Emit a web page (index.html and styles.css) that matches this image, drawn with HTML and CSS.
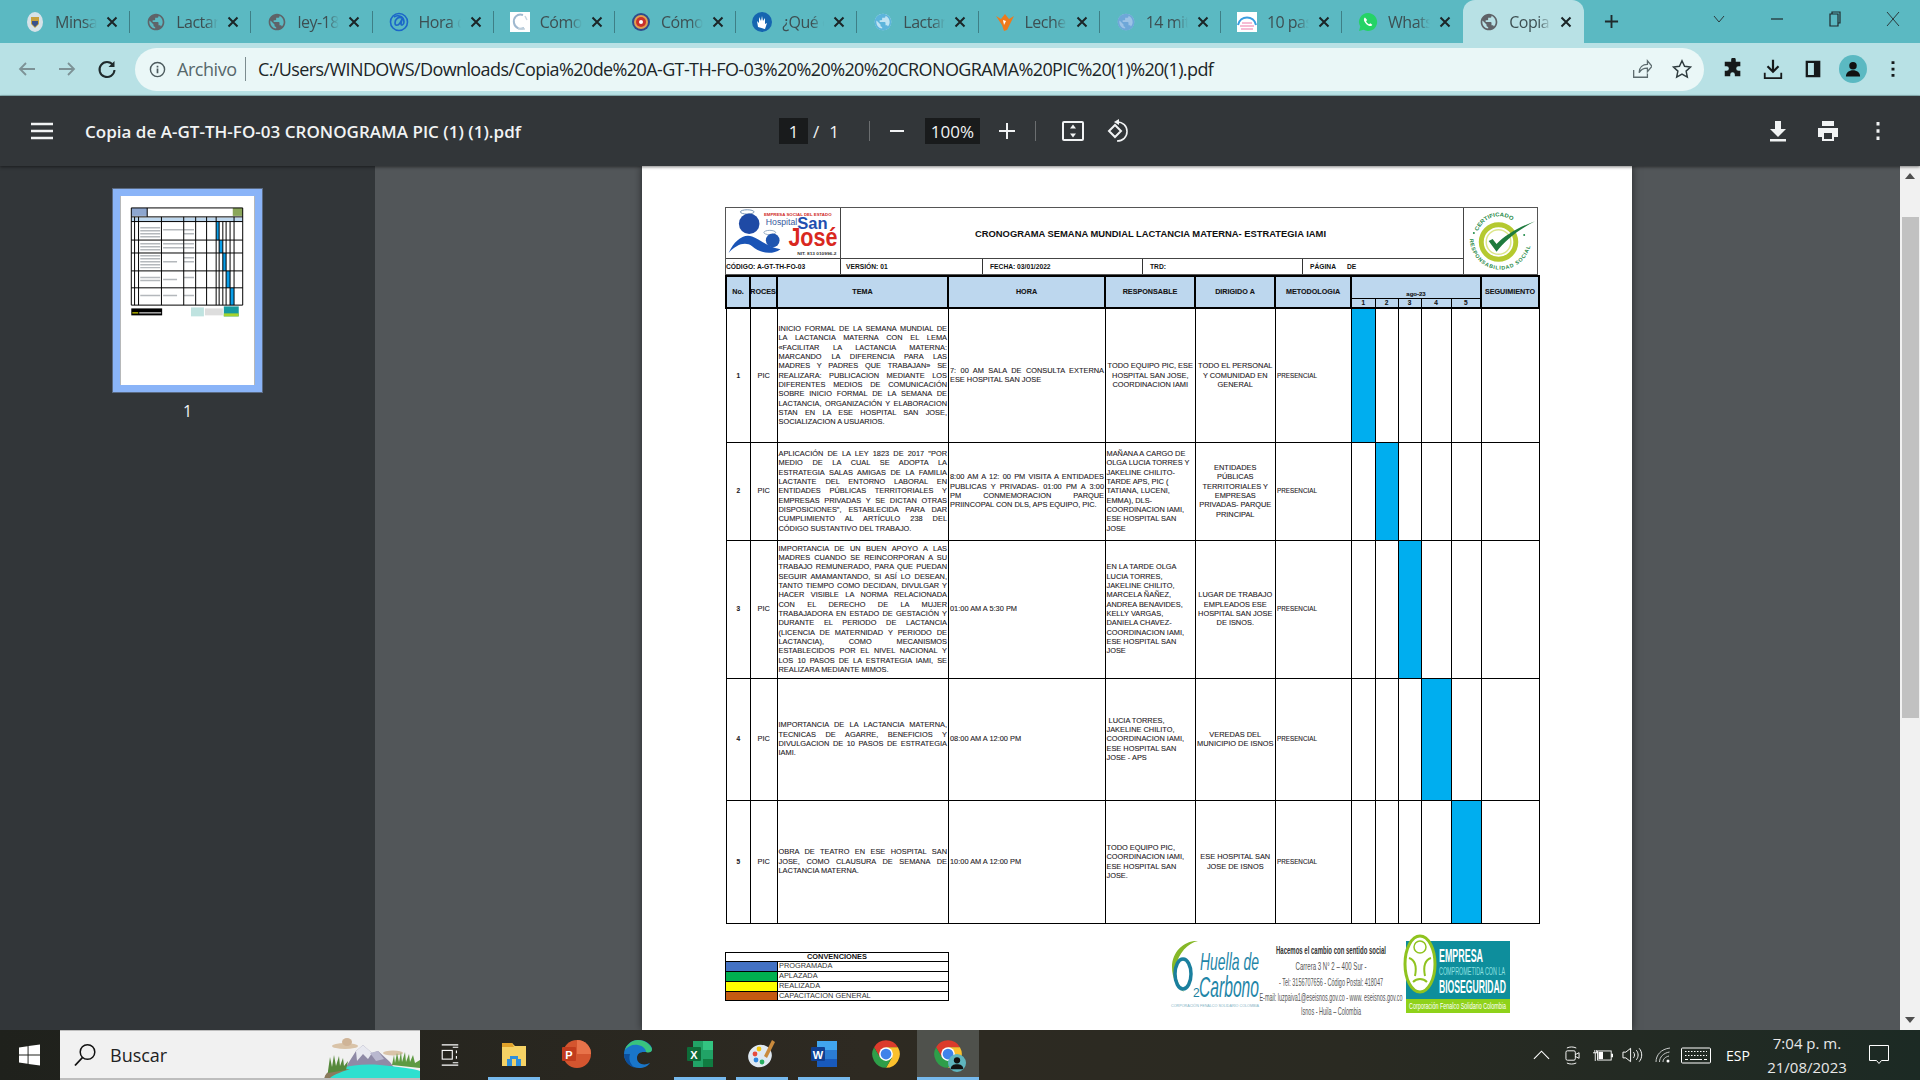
FILE: index.html
```html
<!DOCTYPE html>
<html lang="es">
<head>
<meta charset="utf-8">
<title>Copia de A-GT-TH-FO-03 CRONOGRAMA PIC (1) (1).pdf</title>
<link rel="stylesheet" href="styles.css">
</head>
<body>
<svg class="sprite" aria-hidden="true">
  <symbol id="globe" viewBox="0 0 24 24"><path d="M12 2C6.48 2 2 6.48 2 12s4.48 10 10 10 10-4.48 10-10S17.52 2 12 2zm-1 17.93c-3.95-.49-7-3.85-7-7.93 0-.62.08-1.21.21-1.79L9 15v1c0 1.1.9 2 2 2v1.93zm6.9-2.54c-.26-.81-1-1.39-1.9-1.39h-1v-3c0-.55-.45-1-1-1H8v-2h2c.55 0 1-.45 1-1V7h2c1.1 0 2-.9 2-2v-.41c2.93 1.19 5 4.06 5 7.41 0 2.08-.8 3.97-2.1 5.39z"/></symbol>
  <symbol id="close" viewBox="0 0 12 12"><path d="M1.5 1.5l9 9M10.5 1.5l-9 9" fill="none" stroke="currentColor" stroke-width="2"/></symbol>
  <symbol id="chrome" viewBox="0 0 24 24"><path fill="#db3b2c" d="M2.47 6.5A11 11 0 0 1 21.53 6.5H12L7.24 14.75Z"/><path fill="#fbc02d" d="M21.53 6.5A11 11 0 0 1 12 23L16.76 14.75 12 6.5Z"/><path fill="#2e9e49" d="M12 23A11 11 0 0 1 2.47 6.5L7.24 14.75H16.76Z"/><circle cx="12" cy="12" r="5.5" fill="#fff"/><circle cx="12" cy="12" r="4.3" fill="#3f83ea"/></symbol>
</svg>

<header class="tabstrip">
  <div class="tab"><svg class="fav" viewBox="0 0 20 20"><ellipse cx="10" cy="10" rx="8" ry="10" fill="#d6e2e8"/><path d="M6 5h8v7l-4 4-4-4z" fill="#c8a13c"/><path d="M7 9h6v3l-3 3-3-3z" fill="#39518c"/></svg><span class="tab-title">Minsal</span><svg class="tab-x"><use href="#close"/></svg></div>
  <div class="tab"><svg class="fav fav-gray" viewBox="0 0 24 24"><use href="#globe"/></svg><span class="tab-title">Lactancia</span><svg class="tab-x"><use href="#close"/></svg></div>
  <div class="tab"><svg class="fav fav-gray" viewBox="0 0 24 24"><use href="#globe"/></svg><span class="tab-title">ley-1823</span><svg class="tab-x"><use href="#close"/></svg></div>
  <div class="tab"><svg class="fav" viewBox="0 0 20 20"><circle cx="10" cy="10" r="8.5" fill="none" stroke="#1b66c9" stroke-width="1.6"/><path d="M13 6c-3-2-7 1-7 5 0 3 3 3 5 0l2-4-1 5c0 2 3 1 3-2 0-5-5-8-10-5" fill="none" stroke="#1b66c9" stroke-width="1.6"/></svg><span class="tab-title">Hora de</span><svg class="tab-x"><use href="#close"/></svg></div>
  <div class="tab"><svg class="fav" viewBox="0 0 20 20"><rect width="20" height="20" fill="#fff"/><path d="M13 3C7 1 3 6 4 11c1 5 6 7 10 5" fill="none" stroke="#9fb8cf" stroke-width="2"/><path d="M15 4l2 4M8 17h7" stroke="#c8d6e0" stroke-width="1.5"/></svg><span class="tab-title">Cómo</span><svg class="tab-x"><use href="#close"/></svg></div>
  <div class="tab"><svg class="fav" viewBox="0 0 20 20"><circle cx="10" cy="10" r="9" fill="#2f4b8c"/><circle cx="10" cy="10" r="7" fill="#e0a050"/><circle cx="10" cy="10" r="5" fill="#c9302c"/><circle cx="10" cy="10" r="2" fill="#fff"/></svg><span class="tab-title">Cómo</span><svg class="tab-x"><use href="#close"/></svg></div>
  <div class="tab"><svg class="fav" viewBox="0 0 20 20"><circle cx="10" cy="10" r="10" fill="#1565b0"/><path d="M6 15l-1-6 2 2 0-6 2 4 1-5 1 5 2-3 0 6 2-1-2 6z" fill="#fff"/></svg><span class="tab-title">¿Qué es</span><svg class="tab-x"><use href="#close"/></svg></div>
  <div class="tab"><svg class="fav fav-sky" viewBox="0 0 24 24"><circle cx="12" cy="12" r="10" fill="#bfe3f3"/><use href="#globe"/></svg><span class="tab-title">Lactancia</span><svg class="tab-x"><use href="#close"/></svg></div>
  <div class="tab"><svg class="fav" viewBox="0 0 20 20"><path d="M1 4l5 3 4-5 4 5 5-3-4 8-3 6-3 1-2-6z" fill="#ee7a1c"/><path d="M8 8l3 1-2 4z" fill="#fff"/></svg><span class="tab-title">Leche</span><svg class="tab-x"><use href="#close"/></svg></div>
  <div class="tab"><svg class="fav fav-blue" viewBox="0 0 24 24"><circle cx="12" cy="12" r="10" fill="#9cc3e6"/><use href="#globe"/></svg><span class="tab-title">14 mitos</span><svg class="tab-x"><use href="#close"/></svg></div>
  <div class="tab"><svg class="fav" viewBox="0 0 20 20"><rect width="20" height="20" fill="#fff"/><path d="M1 13C3 3 17 3 19 13" fill="none" stroke="#3b9ee0" stroke-width="2"/><path d="M3 14h14M5 11h10M4 17h12" stroke="#f3a6c6" stroke-width="1.6"/></svg><span class="tab-title">10 pasos</span><svg class="tab-x"><use href="#close"/></svg></div>
  <div class="tab"><svg class="fav" viewBox="0 0 20 20"><path d="M10 1a9 9 0 0 0-7.7 13.6L1 19l4.6-1.2A9 9 0 1 0 10 1z" fill="#25d366"/><path d="M7 5.5c-1 .5-1.5 2-.7 3.7 1 2.200 3 4 5 4.700 1.500.5 2.700-.2 3-1.200l-2-1.500-1.200 1c-1.300-.5-2.500-1.800-3-3l1-1.200z" fill="#fff"/></svg><span class="tab-title">WhatsApp</span><svg class="tab-x"><use href="#close"/></svg></div>
  <div class="tab tab-active"><svg class="fav fav-gray" viewBox="0 0 24 24"><use href="#globe"/></svg><span class="tab-title">Copia de</span><svg class="tab-x"><use href="#close"/></svg></div>
  <svg class="newtab" viewBox="0 0 16 16"><path d="M8 1v14M1 8h14" stroke="#1f2a2c" stroke-width="2"/></svg>
  <div class="winctl">
    <svg class="winbtn" viewBox="0 0 16 16"><path d="M3 5l5 6 5-6" fill="none" stroke="#2b3a3d" stroke-width="1"/></svg>
    <svg class="winbtn" viewBox="0 0 16 16"><path d="M2 8h12" stroke="#1f2a2c" stroke-width="1.2"/></svg>
    <svg class="winbtn" viewBox="0 0 16 16"><path d="M5 3V1h8v11h-2M3 3h8v12H3z" fill="none" stroke="#1f2a2c" stroke-width="1.200"/></svg>
    <svg class="winbtn" viewBox="0 0 16 16"><path d="M2 1l12 14M14 1L2 15" stroke="#2b3a3d" stroke-width="1"/></svg>
  </div>
</header>

<nav class="toolbar">
  <svg class="nav-btn" viewBox="0 0 24 24"><path d="M20 12H5M11 6l-6 6 6 6" fill="none" stroke="#7d9296" stroke-width="1.800"/></svg>
  <svg class="nav-btn" viewBox="0 0 24 24"><path d="M4 12h15M13 6l6 6-6 6" fill="none" stroke="#7d9296" stroke-width="1.800"/></svg>
  <svg class="nav-btn" viewBox="0 0 24 24"><path d="M18 8a7.500 7.500 0 1 0 1.500 5" fill="none" stroke="#1f2a2c" stroke-width="2"/><path d="M19.500 4v6h-6z" fill="#1f2a2c"/></svg>
  <div class="omnibox">
    <svg class="info" viewBox="0 0 18 18"><circle cx="9" cy="9" r="7.500" fill="none" stroke="#4c5a5d" stroke-width="1.500"/><path d="M9 8v5M9 5v1.800" stroke="#4c5a5d" stroke-width="1.800"/></svg>
    <span class="scheme">Archivo</span>
    <span class="omni-sep"></span>
    <span class="url">C:/Users/WINDOWS/Downloads/Copia%20de%20A-GT-TH-FO-03%20%20%20%20CRONOGRAMA%20PIC%20(1)%20(1).pdf</span>
    <svg class="omni-ico omni-share" viewBox="0 0 24 24"><path d="M4 13v8h15v-4M10 16c0-6 4-9 9-9V3l5 6-5 6v-4c-4 0-7 1-9 5z" fill="none" stroke="#5d6b6e" stroke-width="1.400"/></svg>
    <svg class="omni-ico" viewBox="0 0 24 24"><path d="M12 3l2.800 6 6.500.8-4.800 4.500 1.300 6.500L12 17.500 6.200 20.800l1.300-6.500L2.700 9.800 9.200 9z" fill="none" stroke="#2f3c3f" stroke-width="1.600"/></svg>
  </div>
  <div class="tool-right">
    <svg class="tool-btn" viewBox="0 0 24 24"><path fill="#15191a" d="M10 2a2.500 2.500 0 0 1 5 0v2h5v5h-2a2.500 2.500 0 0 0 0 5h2v6h-6v-2a2.500 2.500 0 0 0-5 0v2H3v-6h2a2.500 2.500 0 0 0 0-5H3V4h7z"/></svg>
    <svg class="tool-btn" viewBox="0 0 24 24"><path d="M12 2v12M6 9l6 6 6-6" fill="none" stroke="#15191a" stroke-width="2.400"/><path d="M3 16v6h18v-6" fill="none" stroke="#15191a" stroke-width="2"/></svg>
    <svg class="tool-btn" viewBox="0 0 24 24"><path d="M4 3h16v18H4zM6.500 5.500v13H13v-13z" fill="#15191a" fill-rule="evenodd"/></svg>
    <div class="avatar"><svg viewBox="0 0 24 24"><circle cx="12" cy="8" r="4.500" fill="#111"/><path d="M3.500 21c0-5 4-7.500 8.500-7.500s8.500 2.500 8.500 7.500z" fill="#111"/></svg></div>
    <svg class="tool-btn" viewBox="0 0 24 24"><path d="M12 3.500v3M12 10.500v3M12 17.500v3" stroke="#15191a" stroke-width="3.200"/></svg>
  </div>
</nav>

<section class="pdfbar">
  <div class="pdf-left">
    <svg class="hamb" viewBox="0 0 22 18"><path d="M0 2h22M0 9h22M0 16h22" stroke="#f1f3f4" stroke-width="2.500"/></svg>
    <span class="pdf-title">Copia de A-GT-TH-FO-03 CRONOGRAMA PIC (1) (1).pdf</span>
  </div>
  <div class="pdf-mid">
    <span class="field field-page">1</span>
    <span class="pdf-text slash">/</span>
    <span class="pdf-text total">1</span>
    <span class="pdf-sep sep-a"></span>
    <svg class="pdf-ico ico-minus" viewBox="0 0 16 16"><path d="M1 8h14" stroke="#f1f3f4" stroke-width="2"/></svg>
    <span class="field field-zoom">100%</span>
    <svg class="pdf-ico ico-plus" viewBox="0 0 16 16"><path d="M8 0v16M0 8h16" stroke="#f1f3f4" stroke-width="2"/></svg>
    <span class="pdf-sep sep-b"></span>
    <svg class="pdf-ico ico-fit" viewBox="0 0 24 24"><rect x="2" y="3" width="20" height="18" rx="1" fill="none" stroke="#f1f3f4" stroke-width="2"/><path d="M12 5.500l3 4H9zM12 18.500l3-4H9z" fill="#f1f3f4"/></svg>
    <svg class="pdf-ico ico-rot" viewBox="0 0 24 24"><path d="M9 6l-6 6 6 6 6-6z" fill="none" stroke="#f1f3f4" stroke-width="2"/><path d="M11 3c6 0 10 4 10 9.500S17 22 11 22" fill="none" stroke="#f1f3f4" stroke-width="1.600"/><path d="M8 3l5-3v6z" fill="#f1f3f4"/></svg>
  </div>
  <div class="pdf-right">
    <svg class="pdf-act" viewBox="0 0 24 24"><path d="M9 2h6v8h5l-8 8-8-8h5zM4 20h16v2.500H4z" fill="#f1f3f4"/></svg>
    <svg class="pdf-act" viewBox="0 0 24 24"><path d="M6 2h12v5H6zM2 9h20v9h-4v4H6v-4H2zM8 14v6h8v-6z" fill="#f1f3f4" fill-rule="evenodd"/></svg>
    <svg class="pdf-act" viewBox="0 0 24 24"><path d="M12 3v3.500M12 10.200v3.500M12 17.500V21" stroke="#f1f3f4" stroke-width="3"/></svg>
  </div>
</section>

<main class="viewer">
  <aside class="sidebar">
    <div class="thumb">
      <svg viewBox="0 0 135 190" class="thumb-svg">
        <rect width="135" height="190" fill="#fff"/>
        <rect x="11" y="12" width="16" height="8" fill="#8da6cf"/>
        <rect x="113" y="12" width="10" height="8" fill="#8aa65a"/>
        <rect x="11" y="21.700" width="112" height="4" fill="#bdd7ee"/>
        <path d="M20 32h20M20 35h20M20 38h20M20 41h20M20 48h20M20 51h20M20 54h20M20 60h20M20 63h20M20 66h20M20 69h20M20 72h20M20 82h20M20 85h20M20 100h20M64 34h10M64 38h10M64 48h10M64 52h10M64 62h10M64 66h10M64 82h10M64 100h10M43 34h20M43 48h20M43 52h20M43 66h14M43 84h14M43 100h14" stroke="#b4b8bc" stroke-width="1.500"/>
        <rect x="96.300" y="25.700" width="3" height="18.600" fill="#0a9ee8"/>
        <rect x="99.300" y="44.300" width="3.700" height="13" fill="#0a9ee8"/>
        <rect x="103" y="57.300" width="3.300" height="18" fill="#0a9ee8"/>
        <rect x="106.300" y="75.300" width="4" height="17" fill="#0a9ee8"/>
        <rect x="110.300" y="92.300" width="4" height="17.400" fill="#0a9ee8"/>
        <path d="M11 12H123V109.700H11ZM27 12V21M11 21H123M11 25.700H123M11 44.300H123M11 57.300H123M11 75.300H123M11 92.300H123M14.300 21V109.700M18.300 21V109.700M41.300 21V109.700M63.700 21V109.700M75.700 21V109.700M86.700 21V109.700M96.300 21V109.700M99.300 25.700V109.700M103 25.700V109.700M106.300 25.700V109.700M110.300 25.700V109.700M114.300 21V109.700" fill="none" stroke="#000" stroke-width="1"/>
        <rect x="11" y="113" width="31" height="7" fill="#000"/>
        <rect x="12" y="117" width="6" height="1" fill="#ff0"/><rect x="19" y="117" width="22" height="1" fill="#fff"/>
        <rect x="71" y="112" width="13" height="9" fill="#bfe3e0"/><rect x="85" y="113" width="18" height="7" fill="#ddd"/><rect x="104" y="111" width="15" height="10" fill="#159aa0"/><rect x="104" y="118" width="15" height="3" fill="#a6d32e"/>
      </svg>
    </div>
    <span class="thumb-num">1</span>
  </aside>

  <div class="canvas">
    <article class="page">
      <div class="dochead">
        <div class="dh-logo">
          <svg viewBox="0 0 115 51" class="logo-hsj">
            <ellipse cx="21" cy="4" rx="7" ry="2.200" fill="none" stroke="#7a96b5" stroke-width="1"/>
            <circle cx="23" cy="16" r="10.500" fill="#1f4aa5"/>
            <ellipse cx="44" cy="25" rx="6" ry="2.200" fill="none" stroke="#7a96b5" stroke-width=".8"/>
            <circle cx="47" cy="33" r="7" fill="#1f55b0"/>
            <path d="M2 46c6-13 15-20 24-17 8 3 16 11 29 13-10 7-22 3-29-3-7-5-16-2-24 7z" fill="#1a54b6"/>
            <text x="38" y="8.500" class="lg-red" textLength="69" lengthAdjust="spacingAndGlyphs">EMPRESA SOCIAL DEL ESTADO</text>
            <text x="40" y="17.500" class="lg-hosp" textLength="32" lengthAdjust="spacingAndGlyphs">Hospital</text>
            <text x="72" y="21" class="lg-san" textLength="31" lengthAdjust="spacingAndGlyphs">San</text>
            <text x="63" y="38.500" class="lg-jose" textLength="50" lengthAdjust="spacingAndGlyphs">José</text>
            <text x="72" y="47.500" class="lg-nit" textLength="40" lengthAdjust="spacingAndGlyphs">NIT. 813 010996-2</text>
          </svg>
        </div>
        <div class="dh-title">CRONOGRAMA SEMANA MUNDIAL LACTANCIA MATERNA- ESTRATEGIA IAMI</div>
        <div class="dh-cert">
          <svg viewBox="0 0 74 66" class="logo-cert">
            <defs>
              <path id="arcTop" d="M14 23A23 23 0 0 1 58 26"/>
              <path id="arcBot" d="M6 31A31 31 0 0 0 68 31"/>
            </defs>
            <circle cx="35" cy="34" r="17.500" fill="#fff" stroke="#b5c92f" stroke-width="5"/>
            <circle cx="35" cy="34" r="12.500" fill="#fff" stroke="#dce68a" stroke-width="1.500"/>
            <path d="M25 33l8 11C41 33 54 22 72 13 55 19 42 27 33 36l-4-5z" fill="#1e7a3d"/>
            <circle cx="10" cy="25" r="1" fill="#1f8a48"/><circle cx="61" cy="27" r="1" fill="#1f8a48"/>
            <text class="cert-t"><textPath href="#arcTop" textLength="42" lengthAdjust="spacingAndGlyphs">CERTIFICADO</textPath></text>
            <text class="cert-b"><textPath href="#arcBot" textLength="90" lengthAdjust="spacing">RESPONSABILIDAD SOCIAL</textPath></text>
          </svg>
        </div>
        <div class="dh-cell dh-code">CÓDIGO: A-GT-TH-FO-03</div>
        <div class="dh-cell dh-pad-s">VERSIÓN: 01</div>
        <div class="dh-cell dh-pad">FECHA: 03/01/2022</div>
        <div class="dh-cell dh-pad">TRD:</div>
        <div class="dh-cell dh-pad dh-last">PÁGINA<span class="dh-de">DE</span></div>
      </div>

      <table class="sched">
        <colgroup>
          <col class="c-no"><col class="c-pr"><col class="c-tema"><col class="c-hora"><col class="c-resp"><col class="c-dir"><col class="c-met">
          <col class="c-d1"><col class="c-d2"><col class="c-d3"><col class="c-d4"><col class="c-d5"><col class="c-seg">
        </colgroup>
        <thead>
          <tr class="hrow1">
            <th rowspan="2">No.</th>
            <th rowspan="2"><span class="clip-center">PROCESO</span></th>
            <th rowspan="2">TEMA</th>
            <th rowspan="2">HORA</th>
            <th rowspan="2">RESPONSABLE</th>
            <th rowspan="2">DIRIGIDO A</th>
            <th rowspan="2">METODOLOGIA</th>
            <th colspan="5" class="th-month">ago-23</th>
            <th rowspan="2">SEGUIMIENTO</th>
          </tr>
          <tr class="hrow2"><th>1</th><th>2</th><th>3</th><th>4</th><th>5</th></tr>
        </thead>
        <tbody>
          <tr class="r1">
            <td class="num">1</td><td class="ctr">PIC</td>
            <td class="just">INICIO FORMAL DE LA SEMANA MUNDIAL DE LA LACTANCIA MATERNA CON EL LEMA «FACILITAR LA LACTANCIA MATERNA: MARCANDO LA DIFERENCIA PARA LAS MADRES Y PADRES QUE TRABAJAN» SE REALIZARA: PUBLICACION MEDIANTE LOS DIFERENTES MEDIOS DE COMUNICACIÓN SOBRE INICIO FORMAL DE LA SEMANA DE LACTANCIA, ORGANIZACIÓN Y ELABORACION STAN EN LA ESE HOSPITAL SAN JOSE, SOCIALIZACION A USUARIOS.</td>
            <td class="just hora">7: 00 AM SALA DE CONSULTA EXTERNA ESE HOSPITAL SAN JOSE</td>
            <td class="ctr">TODO EQUIPO PIC, ESE HOSPITAL SAN JOSE, COORDINACION IAMI</td>
            <td class="ctr">TODO EL PERSONAL Y COMUNIDAD EN GENERAL</td>
            <td class="met">PRESENCIAL</td>
            <td class="on"></td><td></td><td></td><td></td><td></td><td></td>
          </tr>
          <tr class="r2">
            <td class="num">2</td><td class="ctr">PIC</td>
            <td class="just"><span class="jblock">APLICACIÓN DE LA LEY 1823 DE 2017 "POR MEDIO DE LA CUAL SE ADOPTA LA ESTRATEGIA SALAS AMIGAS DE LA FAMILIA LACTANTE DEL ENTORNO LABORAL EN ENTIDADES PÚBLICAS TERRITORIALES Y EMPRESAS PRIVADAS Y SE DICTAN OTRAS DISPOSICIONES", ESTABLECIDA PARA DAR</span><span class="jblock">CUMPLIMIENTO AL ARTÍCULO 238 DEL</span>CÓDIGO SUSTANTIVO DEL TRABAJO.</td>
            <td class="just hora">8:00 AM A 12: 00 PM VISITA A ENTIDADES PUBLICAS Y PRIVADAS- 01:00 PM A 3:00 PM CONMEMORACION PARQUE PRIINCOPAL CON DLS, APS EQUIPO, PIC.</td>
            <td class="lft">MAÑANA A CARGO DE OLGA LUCIA TORRES Y JAKELINE CHILITO- TARDE APS, PIC ( TATIANA, LUCENI, EMMA), DLS- COORDINACION IAMI, ESE HOSPITAL SAN JOSE</td>
            <td class="ctr">ENTIDADES PÚBLICAS TERRITORIALES Y EMPRESAS PRIVADAS- PARQUE PRINCIPAL</td>
            <td class="met">PRESENCIAL</td>
            <td></td><td class="on"></td><td></td><td></td><td></td><td></td>
          </tr>
          <tr class="r3">
            <td class="num">3</td><td class="ctr">PIC</td>
            <td class="just">IMPORTANCIA DE UN BUEN APOYO A LAS MADRES CUANDO SE REINCORPORAN A SU TRABAJO REMUNERADO, PARA QUE PUEDAN SEGUIR AMAMANTANDO, SI ASÍ LO DESEAN, TANTO TIEMPO COMO DECIDAN, DIVULGAR Y HACER VISIBLE LA NORMA RELACIONADA CON EL DERECHO DE LA MUJER TRABAJADORA EN ESTADO DE GESTACIÓN Y DURANTE EL PERIODO DE LACTANCIA (LICENCIA DE MATERNIDAD Y PERIODO DE LACTANCIA), COMO MECANISMOS ESTABLECIDOS POR EL NIVEL NACIONAL Y LOS 10 PASOS DE LA ESTRATEGIA IAMI, SE REALIZARA MEDIANTE MIMOS.</td>
            <td class="just hora">01:00 AM A 5:30 PM</td>
            <td class="lft">EN LA TARDE OLGA LUCIA TORRES, JAKELINE CHILITO, MARCELA ÑAÑEZ, ANDREA BENAVIDES, KELLY VARGAS, DANIELA CHAVEZ- COORDINACION IAMI, ESE HOSPITAL SAN JOSE</td>
            <td class="ctr">LUGAR DE TRABAJO EMPLEADOS ESE HOSPITAL SAN JOSE DE ISNOS.</td>
            <td class="met">PRESENCIAL</td>
            <td></td><td></td><td class="on"></td><td></td><td></td><td></td>
          </tr>
          <tr class="r4">
            <td class="num">4</td><td class="ctr">PIC</td>
            <td class="just">IMPORTANCIA DE LA LACTANCIA MATERNA, TECNICAS DE AGARRE, BENEFICIOS Y DIVULGACION DE 10 PASOS DE ESTRATEGIA IAMI.</td>
            <td class="just hora">08:00 AM A 12:00 PM</td>
            <td class="lft">&nbsp;LUCIA TORRES, JAKELINE CHILITO, COORDINACION IAMI, ESE HOSPITAL SAN JOSE - APS</td>
            <td class="ctr">VEREDAS DEL MUNICIPIO DE ISNOS</td>
            <td class="met">PRESENCIAL</td>
            <td></td><td></td><td></td><td class="on"></td><td></td><td></td>
          </tr>
          <tr class="r5">
            <td class="num">5</td><td class="ctr">PIC</td>
            <td class="just">OBRA DE TEATRO EN ESE HOSPITAL SAN JOSE, COMO CLAUSURA DE SEMANA DE LACTANCIA MATERNA.</td>
            <td class="just hora">10:00 AM A 12:00 PM</td>
            <td class="lft">TODO EQUIPO PIC, COORDINACION IAMI, ESE HOSPITAL SAN JOSE.</td>
            <td class="ctr">ESE HOSPITAL SAN JOSE DE ISNOS</td>
            <td class="met">PRESENCIAL</td>
            <td></td><td></td><td></td><td></td><td class="on"></td><td></td>
          </tr>
        </tbody>
      </table>

      <div class="docfoot">
        <div class="legend">
          <div class="leg-head">CONVENCIONES</div>
          <div class="leg-swatch sw-blue"></div><div class="leg-label">PROGRAMADA</div>
          <div class="leg-swatch sw-green"></div><div class="leg-label">APLAZADA</div>
          <div class="leg-swatch sw-yellow"></div><div class="leg-label">REALIZADA</div>
          <div class="leg-swatch sw-orange"></div><div class="leg-label">CAPACITACION GENERAL</div>
        </div>
        <div class="brands">
          <svg viewBox="0 0 90 80" class="logo-huella">
            <path d="M2 32C2 16 15 5 28 6 18 8 8 18 6 32c-1 9 2 18 8 25C6 52 2 42 2 32z" fill="#86b828"/>
            <ellipse cx="13" cy="39" rx="8" ry="15" fill="none" stroke="#1a7f9e" stroke-width="3.500"/>
            <text x="23" y="62" class="hu-two">2</text>
            <text x="30" y="35" class="hu-big" textLength="59" lengthAdjust="spacingAndGlyphs">Huella de</text>
            <text x="29" y="62" class="hu-car" textLength="60" lengthAdjust="spacingAndGlyphs">Carbono</text>
            <text x="1" y="72" class="hu-small" textLength="88" lengthAdjust="spacingAndGlyphs">CORPORACIÓN FENALCO SOLIDARIO COLOMBIA</text>
          </svg>
          <svg viewBox="0 0 144 80" class="logo-text">
            <text x="71" y="19" class="ft-b" textLength="110" lengthAdjust="spacingAndGlyphs">Hacemos el cambio con sentido social</text>
            <text x="71" y="35" class="ft" textLength="71" lengthAdjust="spacingAndGlyphs">Carrera 3 N° 2 – 400 Sur -</text>
            <text x="71" y="51" class="ft" textLength="104" lengthAdjust="spacingAndGlyphs">- Tel: 3156707656 - Código Postal: 418047</text>
            <text x="71" y="66" class="ft" textLength="143" lengthAdjust="spacingAndGlyphs">E-mail: luzpaiva1@eseisnos.gov.co - www. eseisnos.gov.co</text>
            <text x="71" y="80" class="ft" textLength="60" lengthAdjust="spacingAndGlyphs">Isnos - Huila – Colombia</text>
          </svg>
          <svg viewBox="0 0 106 80" class="logo-emp">
            <rect x="2" y="6" width="104" height="58" fill="#0e8e9c"/>
            <rect x="2" y="64" width="104" height="14" fill="#8fd21a"/>
            <ellipse cx="16" cy="29" rx="15" ry="28" fill="#fff" stroke="#8fc31f" stroke-width="3"/>
            <circle cx="16" cy="12" r="6" fill="none" stroke="#8fc31f" stroke-width="1.500"/>
            <path d="M5 23c6 2 8 8 6 18M27 23c-6 2-8 8-6 18M9 47c4-4 10-4 14 0" fill="none" stroke="#8fc31f" stroke-width="2"/>
            <text x="35" y="27" class="em-b" textLength="44" lengthAdjust="spacingAndGlyphs">EMPRESA</text>
            <text x="35" y="40" class="em-s" textLength="66" lengthAdjust="spacingAndGlyphs">COMPROMETIDA CON LA</text>
            <text x="35" y="58" class="em-b" textLength="67" lengthAdjust="spacingAndGlyphs">BIOSEGURIDAD</text>
            <text x="5" y="74" class="em-f" textLength="97" lengthAdjust="spacingAndGlyphs">Corporación Fenalco Solidario Colombia</text>
          </svg>
        </div>
      </div>
    </article>
  </div>

  <div class="scrollbar">
    <svg class="sb-arrow" viewBox="0 0 10 6"><path d="M5 0l5 6H0z" fill="#505050"/></svg>
    <div class="sb-track"><div class="sb-thumb"></div></div>
    <svg class="sb-arrow" viewBox="0 0 10 6"><path d="M0 0h10L5 6z" fill="#505050"/></svg>
  </div>
</main>

<footer class="taskbar">
  <svg class="start" viewBox="0 0 22 22"><path d="M0 3.200l9-1.300v8.600H0zM10 1.700L22 0v10.500H10zM0 11.500h9v8.600l-9-1.300zM10 11.500h12V22l-12-1.700z" fill="#fff"/></svg>
  <div class="search">
    <svg class="search-ico" viewBox="0 0 24 24"><circle cx="14.500" cy="9" r="7.300" fill="none" stroke="#111" stroke-width="1.500"/><path d="M9.500 14.500L2 22.500" stroke="#111" stroke-width="1.800"/></svg>
    <span class="search-text">Buscar</span>
    <svg class="search-art" viewBox="0 0 100 50">
      <ellipse cx="25" cy="15" rx="13" ry="3" fill="#d9c3a8"/><ellipse cx="27" cy="11" rx="5" ry="4" fill="#cfb497"/>
      <ellipse cx="73" cy="22" rx="10" ry="2.500" fill="#d9c3a8"/>
      <path d="M22 42l14-22 7-6 9 8 6-2 12 11 8 11z" fill="#8f8aa6"/>
      <path d="M36 20l7-6 9 8-4 6-5-5-6 7z" fill="#e8e9f0"/>
      <path d="M50 22l8-2 6 8-8 2z" fill="#b9b8cf"/>
      <path d="M5 50C10 38 30 32 60 34c20 2 36 4 40 6v10z" fill="#2de0cf"/>
      <path d="M4 50c0-6 3-9 8-11l18-1c-8 3-20 6-22 12z" fill="#8a7a5c"/>
      <path d="M8 40l2-14 2 10 2-12 2 11 3-10 1 10 3-8 1 8 4-5-2 9-18 3z" fill="#56893b"/>
      <path d="M72 34l2-10 1 8 2-10 2 9 2-10 1 10 3-10 1 10 3-8 1 8 3-7 2 8 5-3v8z" fill="#5e9a42"/>
    </svg>
  </div>
  <svg class="task-view" viewBox="0 0 24 24"><path d="M3 1h18M3 23h18M15 3.500h6M15 20.500h6M19 7v3M19 13v3" stroke="#fff" stroke-width="1.200"/><rect x="3.500" y="7" width="11" height="9.500" fill="none" stroke="#fff" stroke-width="1.200"/></svg>
  <div class="apps">
    <div class="app app-run"><svg class="app-ico" viewBox="0 0 30 30"><path d="M3 4h10l3 3h11v20H3z" fill="#f5d265"/><path d="M3 4h10l2 4H3z" fill="#e0a22a"/><path d="M11 17h8v3h3v7H8v-7h3z" fill="#2f8fdc"/><rect x="13" y="20" width="4" height="7" fill="#f5d265"/></svg></div>
    <div class="app"><svg class="app-ico" viewBox="0 0 30 30"><circle cx="16" cy="15" r="14" fill="#d4552f"/><path d="M16 1a14 14 0 0 1 14 14H16z" fill="#e8734a"/><rect x="1" y="8" width="14" height="14" rx="1" fill="#c13c1d"/><text x="8" y="19.500" class="ai-l">P</text></svg></div>
    <div class="app"><svg class="app-ico" viewBox="0 0 30 30"><path d="M15 1C7 1 1 8 1 15c0 9 8 14 15 14 5 0 9-2 11-5-6 3-13 1-13-5 0-4 3-6 7-6 4 0 8 1 8-3C29 6 23 1 15 1z" fill="#1976c9"/><path d="M15 1C9 1 3 6 2 11c3-4 8-6 13-5 5 1 8 4 8 7 2 1 6 1 6-3C28 6 22 1 15 1z" fill="#39c47e"/><path d="M1 15c0 7 5 12 11 14-4-3-7-8-5-14z" fill="#0c4f9c"/></svg></div>
    <div class="app app-run"><svg class="app-ico" viewBox="0 0 30 30"><path d="M8 2h20v26H8z" fill="#21a366"/><path d="M18 2h10v9H18z" fill="#33c481"/><path d="M18 20h10v8H18z" fill="#107c41"/><rect x="2" y="8" width="14" height="14" rx="1" fill="#0e6b38"/><text x="9" y="19.500" class="ai-l">X</text></svg></div>
    <div class="app app-run"><svg class="app-ico" viewBox="0 0 30 30"><ellipse cx="13" cy="17" rx="12" ry="11" fill="#dfe9f2" transform="rotate(-25 13 17)"/><circle cx="8" cy="15" r="2.400" fill="#e74c3c"/><circle cx="12" cy="10" r="2.400" fill="#f1c40f"/><circle cx="9" cy="21" r="2.400" fill="#2e86de"/><circle cx="15" cy="23" r="2.400" fill="#27ae60"/><path d="M25 1l3 2-8 16-3-2z" fill="#c98a3c"/></svg></div>
    <div class="app app-run"><svg class="app-ico" viewBox="0 0 30 30"><path d="M8 2h20v26H8z" fill="#2b7cd3"/><path d="M8 2h20v9H8z" fill="#41a5ee"/><path d="M8 20h20v8H8z" fill="#185abd"/><rect x="2" y="8" width="14" height="14" rx="1" fill="#103f91"/><text x="9" y="19.500" class="ai-l">W</text></svg></div>
    <div class="app"><svg class="app-ico" viewBox="0 0 24 24"><use href="#chrome"/></svg></div>
    <div class="app app-active"><svg class="app-ico" viewBox="0 0 24 24"><use href="#chrome"/></svg>
      <svg class="app-badge" viewBox="0 0 20 20"><circle cx="10" cy="10" r="10" fill="#5fb5be"/><circle cx="10" cy="7" r="3.500" fill="#111"/><path d="M3 17c0-4 3-5.500 7-5.500s7 1.500 7 5.500z" fill="#111"/></svg></div>
  </div>
  <div class="tray">
    <svg class="tr t-chev" viewBox="0 0 18 10"><path d="M1 9l8-8 8 8" fill="none" stroke="#fff" stroke-width="1.200"/></svg>
    <svg class="tr t-cam" viewBox="0 0 16 20"><rect x="1" y="5" width="10" height="10" rx="1.500" fill="none" stroke="#fff" stroke-width="1"/><path d="M11 9l4-2v6l-4-2M2 2c3-1.500 7-1.500 10 0M2 18c3 1.500 7 1.500 10 0" fill="none" stroke="#fff" stroke-width="1"/></svg>
    <svg class="tr t-bat" viewBox="0 0 22 14"><rect x="5" y="2" width="15" height="10" fill="none" stroke="#fff"/><path d="M20 5h2v4h-2z" fill="#fff"/><rect x="6" y="3" width="5" height="8" fill="#fff"/><path d="M0 4h5M2 1v3M4 1v3M2.500 4v9" stroke="#fff"/></svg>
    <svg class="tr t-vol" viewBox="0 0 22 16"><path d="M1 5h3l5-4v14l-5-4H1z" fill="none" stroke="#fff"/><path d="M12 5c1.500 2 1.500 4 0 6M15 3c2.500 3 2.500 7 0 10M18 1c3.500 4 3.500 10 0 14" fill="none" stroke="#fff"/></svg>
    <svg class="tr t-wifi" viewBox="0 0 16 16"><path d="M1 15C1 8 6 2 15 1M4.500 15c0-5 4-9 10-10M8 15c0-3 2-5 6-6" fill="none" stroke="#c9cccb"/><circle cx="13" cy="14" r="1.500" fill="#fff"/></svg>
    <svg class="tr t-key" viewBox="0 0 30 16"><rect x=".5" y=".5" width="29" height="15" rx="1" fill="none" stroke="#fff"/><path d="M4 4h22M4 8h22" stroke="#fff" stroke-dasharray="1.500 1.500"/><path d="M4 12h3M9 12h12M23 12h3" stroke="#fff"/></svg>
    <span class="lang">ESP</span>
    <div class="clock"><span>7:04 p. m.</span><span>21/08/2023</span></div>
    <svg class="tr t-note" viewBox="0 0 20 20"><path d="M.5 .5h19v15h-7l-2.500 3-2.500-3h-7z" fill="none" stroke="#fff"/></svg>
  </div>
</footer>
</body>
</html>
```
FILE: styles.css
```css
* { box-sizing: border-box; }
html, body { margin: 0; height: 100%; }
body {
  width: 1920px; height: 1080px; overflow: hidden;
  display: flex; flex-direction: column;
  font-family: "Open Sans", "Noto Sans", sans-serif;
  background: #525659;
}
.sprite { display: none; }

/* tab strip */
.tabstrip { height: 43px; background: #5bb9c2; display: flex; align-items: stretch; padding-left: 9px; flex: none; }
.tab { width: 121.2px; flex: none; display: flex; align-items: center; padding-left: 16px; position: relative; }
.tab::after { content: ""; position: absolute; right: 0; top: 11px; height: 22px; width: 1px; background: #3e7f86; }
.tab:nth-child(12)::after, .tab-active::after { display: none; }
.tab-active { background: #b8e1e5; border-radius: 12px 12px 0 0; }
.fav { width: 20px; height: 20px; flex: none; fill: #5f6368; }
.fav-gray { fill: #5f6368; }
.fav-sky { fill: #5cb4dc; }
.fav-blue { fill: #6ea7d8; }
.tab-title { width: 42px; margin-left: 10px; font-size: 16px; letter-spacing: -.5px; color: #3d4f52; overflow: hidden; white-space: nowrap;
  -webkit-mask-image: linear-gradient(90deg, #000 70%, transparent); mask-image: linear-gradient(90deg, #000 70%, transparent); }
.tab-x { width: 12px; height: 12px; margin-left: 9px; color: #1b2527; flex: none; }
.newtab { width: 15px; height: 15px; margin: 14px 0 0 20px; flex: none; }
.winctl { margin-left: auto; display: flex; align-items: flex-start; padding: 10px 19px 0 0; gap: 42px; }
.winbtn { width: 16px; height: 18px; flex: none; }

/* chrome toolbar */
.toolbar { height: 53px; background: #b8e1e5; border-bottom: 1px solid #8fb7bb; display: flex; align-items: center; padding-left: 15px; flex: none; }
.nav-btn { width: 24px; height: 24px; margin-right: 16px; flex: none; }
.omnibox { width: 1569px; height: 43px; margin: 0; border-radius: 22px; background: #eaf7f7; display: flex; align-items: center; padding-left: 14px; flex: none; }
.info { width: 17px; height: 17px; flex: none; }
.scheme { margin-left: 11px; font-size: 18px; letter-spacing: -.45px; color: #56686b; width: 67px; white-space: nowrap; }
.omni-sep { width: 1px; height: 24px; background: #7c8c8f; margin-left: 1px; }
.url { margin-left: 12px; font-size: 18px; letter-spacing: -.61px; color: #1c2628; white-space: nowrap; width: 1385px; }
.omni-ico { width: 22px; height: 22px; flex: none; }
.omni-share { margin-right: 19px; margin-left: -13px; }
.tool-right { margin-left: 9px; display: flex; align-items: center; gap: 0; }
.tool-btn { width: 22px; height: 22px; margin: 0 9px; flex: none; }
.avatar { width: 28px; height: 28px; border-radius: 50%; background: #5bb9c2; margin: 0 6px; display: flex; align-items: center; justify-content: center; }
.avatar svg { width: 20px; height: 20px; }

/* pdf toolbar */
.pdfbar { height: 70px; background: #323639; display: flex; align-items: center; flex: none; position: relative; z-index: 2; box-shadow: 0 1px 3px rgba(0,0,0,.5); color: #f1f3f4; }
.pdf-left { width: 779px; display: flex; align-items: center; padding-left: 31px; flex: none; }
.hamb { width: 22px; height: 18px; flex: none; }
.pdf-title { margin-left: 32px; font: 600 17px "Open Sans", sans-serif; letter-spacing: .02px; white-space: nowrap; }
.pdf-mid { display: flex; align-items: center; flex: none; }
.field { height: 26px; background: #191b1c; display: flex; align-items: center; justify-content: center; font-size: 17px; flex: none; }
.field-page { width: 29px; }
.field-zoom { width: 55px; margin-left: 20px; }
.pdf-text { font-size: 17px; }
.slash { margin-left: 5px; }
.total { margin-left: 10px; }
.pdf-sep { width: 1px; height: 20px; background: #6b6e70; flex: none; }
.sep-a { margin-left: 30px; }
.ico-minus { width: 16px; height: 16px; margin-left: 19px; }
.ico-plus { width: 16px; height: 16px; margin-left: 19px; }
.sep-b { margin-left: 20px; }
.ico-fit { width: 24px; height: 24px; margin-left: 25px; }
.ico-rot { width: 24px; height: 24px; margin-left: 21px; }
.pdf-right { margin-left: auto; display: flex; align-items: center; gap: 26px; padding-right: 30px; }
.pdf-act { width: 24px; height: 24px; flex: none; }

/* viewer */
.viewer { height: 864px; display: flex; flex: none; overflow: hidden; }
.sidebar { width: 375px; background: #323639; display: flex; flex-direction: column; align-items: flex-start; padding: 22px 0 0 112px; flex: none; }
.thumb { width: 151px; height: 205px; border: 8px solid #8ab4f8; outline: 1px solid #5a6a82; outline-offset: -1px; flex: none; }
.thumb-svg { display: block; width: 135px; height: 189px; }
.thumb-num { width: 151px; text-align: center; color: #f1f3f4; font-size: 16px; margin-top: 7px; }
.canvas { flex: 1; display: flex; padding-left: 267px; min-width: 0; }
.page { width: 990px; height: 864px; background: #fff; padding: 41px 0 0 83px; box-shadow: 0 0 8px rgba(0,0,0,.55); flex: none; }
.scrollbar { width: 20px; background: #f1f1f1; display: flex; flex-direction: column; align-items: center; flex: none; }
.sb-arrow { width: 10px; height: 6px; margin: 7px 0; flex: none; }
.sb-track { flex: 1; width: 100%; padding-top: 31px; }
.sb-thumb { width: 17px; height: 501px; margin: 0 auto; background: #c1c1c1; }

/* document header */
.dochead { width: 813px; display: grid; grid-template-columns: 115px 142px 160px 160px 160px 74px; grid-template-rows: 51px 15px; font-family: "Liberation Sans", Arial, sans-serif; border: 1px solid #555; color: #111; }
.dh-logo { grid-row: 1; grid-column: 1; border-right: 1px solid #444; border-bottom: 1px solid #444; }
.dh-title { grid-row: 1; grid-column: 2 / 6; border-bottom: 1px solid #444; display: flex; align-items: center; justify-content: center; font-size: 9.400px; font-weight: 700; padding-right: 3px; white-space: nowrap; }
.dh-cert { grid-row: 1 / 3; grid-column: 6; border-left: 1px solid #444; }
.dh-cell { font-size: 6.700px; font-weight: 700; display: flex; align-items: center; border-right: 1px solid #333; white-space: nowrap; }
.dh-pad-s { padding-left: 5px; }
.dh-pad { padding-left: 7px; }
.dh-last { border-right: 0; }
.dh-de { margin-left: 11px; }
.logo-hsj, .logo-cert { display: block; width: 100%; height: 100%; font-family: "Liberation Sans", Arial, sans-serif; overflow: hidden; }
.lg-red { font-size: 4px; font-weight: 700; fill: #cf2a27; }
.lg-hosp { font-size: 9px; fill: #3a5b9e; }
.lg-san { font-size: 17px; font-weight: 700; fill: #1f4fb0; }
.lg-jose { font-size: 26px; font-weight: 700; fill: #d9281f; }
.lg-nit { font-size: 4px; font-weight: 700; fill: #333; }
.cert-t { font-size: 5.500px; font-weight: 700; fill: #1f8a48; }
.cert-b { font-size: 5.400px; font-weight: 700; fill: #1f8a48; }

/* schedule table */
.sched { width: 813px; table-layout: fixed; border-collapse: collapse; font-family: "Liberation Sans", Arial, sans-serif; color: #1e2024; font-size: 7.400px; line-height: 9.350px; -webkit-text-stroke: .1px #1e2024; }
.c-no { width: 24px; } .c-pr { width: 27px; } .c-tema { width: 171px; } .c-hora { width: 157px; }
.c-resp { width: 90px; } .c-dir { width: 80px; } .c-met { width: 76px; }
.c-d1 { width: 24px; } .c-d2 { width: 23px; } .c-d3 { width: 23px; } .c-d4 { width: 30px; } .c-d5 { width: 30px; } .c-seg { width: 58px; }
.sched th { background: #bdd7ee; border: 2px solid #000; font-size: 7.200px; font-weight: 700; padding: 0; color: #111; overflow: hidden; white-space: nowrap; }
.hrow1 th { vertical-align: middle; padding-bottom: 1px; }
.hrow1 { height: 22px; }
.hrow2 { height: 10px; }
.sched .th-month { border-bottom: 1px solid #000; font-size: 6px; vertical-align: bottom; line-height: 7px; padding-bottom: 0; }
.hrow2 th { border-width: 1px 1px 2px; font-size: 6.500px; line-height: 8px; }
.clip-center { display: flex; justify-content: center; }
.sched td { border: 1px solid #000; padding: 0 .5px 0 1px; vertical-align: middle; overflow: hidden; }
.r1 { height: 134px; } .r2 { height: 98px; } .r3 { height: 138px; } .r4 { height: 122px; } .r5 { height: 123px; }
.sched .num { text-align: center; font-weight: 700; font-size: 6.500px; }
.ctr { text-align: center; }
.lft { text-align: left; }
.just { text-align: justify; }
.jblock { display: block; text-align-last: justify; }
.sched .hora { padding-left: 1.500px; }
.sched .met { font-size: 6.300px; padding-left: 1.500px; }
.sched .on { background: #00aeef; }

/* footer of the document */
.docfoot { display: flex; align-items: flex-start; margin-top: 28px; }
.legend { width: 224px; display: grid; grid-template-columns: 52px 1fr; grid-template-rows: 8px 10px 10px 10px 9px; font: 7.400px/8.500px "Liberation Sans", Arial, sans-serif; color: #333; border: 1px solid #000; flex: none; }
.leg-head { grid-column: 1 / 3; text-align: center; font-weight: 700; color: #111; }
.leg-swatch { border-top: 1px solid #000; border-right: 1px solid #000; }
.leg-label { border-top: 1px solid #000; padding-left: 1px; white-space: nowrap; }
.sw-blue { background: #4472c4; } .sw-green { background: #00b050; } .sw-yellow { background: #ff0; } .sw-orange { background: #c55a11; }
.brands { display: flex; align-items: flex-start; margin: -17px 0 0 221px; flex: none; }
.brands svg { display: block; flex: none; font-family: "Liberation Sans", Arial, sans-serif; overflow: visible; }
.logo-huella { width: 90px; height: 80px; }
.logo-text { width: 144px; height: 80px; }
.logo-emp { width: 106px; height: 80px; }
.hu-big { font-size: 24px; font-style: italic; fill: #1f86a8; }
.hu-car { font-size: 30px; font-style: italic; fill: #1f86a8; }
.hu-two { font-size: 12px; fill: #1a7f9e; }
.hu-small { font-size: 4px; fill: #7fb2c4; }
.ft { font-size: 11px; fill: #555; text-anchor: middle; }
.ft-b { font-size: 11px; font-weight: 700; fill: #333; text-anchor: middle; }
.em-b { font-size: 18px; font-weight: 700; fill: #fff; }
.em-s { font-size: 10px; fill: #8fe0e0; }
.em-f { font-size: 9px; fill: #fff; }

/* taskbar */
.taskbar { height: 50px; background: linear-gradient(90deg, #1f211c, #2e2a22 45%, #2a2a22 70%, #1c2a24); display: flex; align-items: stretch; flex: none; position: relative; z-index: 3; }
.start { width: 21px; height: 38px; margin: 6px 0 0 19px; align-self: flex-start; flex: none; }
.search { width: 360px; margin-left: 20px; background: #f1f1f1; border: 1px solid #bdbdbd; border-width: 1px 0 2px; display: flex; align-items: center; position: relative; flex: none; overflow: hidden; }
.search-ico { width: 24px; height: 24px; margin-left: 13px; flex: none; }
.search-text { margin-left: 13px; font-size: 18px; color: #222; }
.search-art { position: absolute; right: 0; top: 0; width: 100px; height: 50px; }
.task-view { width: 22px; height: 24px; margin: 13px 0 0 19px; flex: none; align-self: flex-start; }
.apps { display: flex; margin-left: 22px; }
.app { width: 62px; display: flex; align-items: center; justify-content: center; position: relative; flex: none; padding-bottom: 2px; }
.app-ico { width: 30px; height: 30px; flex: none; font-family: "Liberation Sans", Arial, sans-serif; }
.app-run::after { content: ""; position: absolute; left: 5px; right: 5px; bottom: 0; height: 3px; background: #76b9ed; }
.app-active { background: #4f514c; }
.app-active::after { content: ""; position: absolute; left: 0; right: 0; bottom: 0; height: 3px; background: #76b9ed; }
.app-badge { position: absolute; left: 31px; top: 24px; width: 18px; height: 18px; }
.ai-l { font-size: 11px; font-weight: 700; fill: #fff; text-anchor: middle; }
.tray { margin-left: auto; display: flex; align-items: center; color: #fff; padding-right: 31px; }
.tr { flex: none; }
.t-chev { width: 17px; height: 10px; }
.t-cam { width: 15px; height: 19px; margin-left: 15px; }
.t-bat { width: 20px; height: 13px; margin-left: 13px; }
.t-vol { width: 21px; height: 16px; margin-left: 9px; }
.t-wifi { width: 16px; height: 16px; margin-left: 12px; }
.t-key { width: 30px; height: 17px; margin-left: 10px; }
.lang { margin-left: 15px; font-size: 14px; width: 24px; }
.clock { display: flex; flex-direction: column; align-items: center; width: 78px; margin-left: 18px; font-size: 15px; line-height: 24px; color: #e8e8e8; white-space: nowrap; }
.t-note { width: 20px; height: 20px; margin-left: 23px; }
```
